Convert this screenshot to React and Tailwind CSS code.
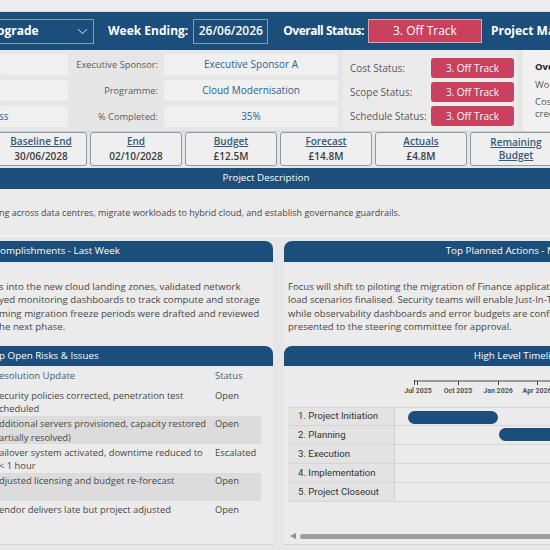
import { ChevronDown } from "lucide-react";

const risks = [
  { text: ["ecurity policies corrected, penetration test", "cheduled"], status: "Open", shade: false },
  { text: ["dditional servers provisioned, capacity restored", "artially resolved)"], status: "Open", shade: true },
  { text: ["ailover system activated, downtime reduced to", "< 1 hour"], status: "Escalated", shade: false },
  { text: ["djusted licensing and budget re-forecast"], status: "Open", shade: true },
  { text: ["endor delivers late but project adjusted"], status: "Open", shade: false },
];

const phases = [
  "1. Project Initiation",
  "2. Planning",
  "3. Execution",
  "4. Implementation",
  "5. Project Closeout",
];

const cards = [
  { label: "Baseline End", value: "30/06/2028" },
  { label: "End", value: "02/10/2028" },
  { label: "Budget", value: "£12.5M" },
  { label: "Forecast", value: "£14.8M" },
  { label: "Actuals", value: "£4.8M" },
  { label: "Remaining Budget", value: "" },
];

function InfoBox({ children }) {
  return (
    <div className="h-[21px] bg-[#f0f0f0] rounded-[2px] flex items-center justify-center text-[#2f6090] text-[10px]">
      {children}
    </div>
  );
}

function Badge() {
  return (
    <div className="w-[83px] h-[20px] bg-[#c9415c] rounded-[3px] flex items-center justify-center text-white text-[10px]">
      3. Off Track
    </div>
  );
}

function App() {
  return (
    <div className="w-[550px] h-[550px] overflow-hidden bg-[#e6e6e6] font-['Open_Sans',sans-serif] text-[#474747]">
      <div className="h-[12px] bg-[#ececec] border-b border-[#dadada]" />

      {/* header band */}
      <div className="h-[38px] bg-[#1b4e7a] flex items-center text-white whitespace-nowrap overflow-hidden">
        <div className="shrink-0 w-[94px] h-[25px] border border-l-0 border-[#7d9dbb] flex items-center justify-between pr-[2px]">
          <span className="text-[12px] font-bold -ml-[3px]">ograde</span>
          <ChevronDown size={17} strokeWidth={1.2} />
        </div>
        <span className="shrink-0 ml-[14px] text-[12px] font-bold">Week Ending:</span>
        <div className="shrink-0 ml-[5px] w-[75px] h-[25px] border border-[#7d9dbb] flex items-center justify-center text-[12px] font-semibold">
          26/06/2026
        </div>
        <span className="shrink-0 ml-[15px] text-[12px] font-bold tracking-[-0.5px]">Overall Status:</span>
        <div className="shrink-0 ml-[4px] w-[114px] h-[24px] bg-[#c9415c] border border-[#d9a3b0] flex items-center justify-center text-[12px]">
          3. Off Track
        </div>
        <span className="shrink-0 ml-[9px] text-[12px] font-bold">Project Manager:</span>
      </div>

      {/* info region */}
      <div className="h-[82px] flex border-b border-[#d2d2d2] overflow-hidden">
        <div className="shrink-0 w-[68px] pt-[4px] flex flex-col gap-[5px]">
          <InfoBox />
          <InfoBox />
          <div className="h-[21px] bg-[#f0f0f0] rounded-[2px] flex items-center text-[#2f6090] text-[10px] -ml-[1px]">
            ss
          </div>
        </div>
        <div className="shrink-0 w-[96px] pt-[4px] pr-[6px] flex flex-col gap-[5px] text-right text-[9.3px] text-[#5a5a5a]">
          <div className="h-[21px] leading-[21px]">Executive Sponsor:</div>
          <div className="h-[21px] leading-[21px]">Programme:</div>
          <div className="h-[21px] leading-[21px]">% Completed:</div>
        </div>
        <div className="shrink-0 w-[174px] pt-[4px] flex flex-col gap-[5px]">
          <InfoBox>Executive Sponsor A</InfoBox>
          <InfoBox>Cloud Modernisation</InfoBox>
          <InfoBox>35%</InfoBox>
        </div>
        <div className="shrink-0 w-[175px] ml-[5px] bg-[#ebebeb] pl-[7px] pt-[8px] flex flex-col gap-[4px]">
          {["Cost Status:", "Scope Status:", "Schedule Status:"].map((l) => (
            <div key={l} className="flex items-center h-[20px]">
              <span className="w-[81px] text-[10px] text-[#5a5a5a]">{l}</span>
              <Badge />
            </div>
          ))}
        </div>
        <div className="shrink-0 w-[200px] ml-[5px] bg-[#f1f1f1] pl-[12px] pt-[10px] text-[9.5px] whitespace-nowrap">
          <div className="font-bold text-[#222] leading-[14px]">Overall Commentary</div>
          <div className="mt-[4px] text-[#555] leading-[14px]">Workstreams progressing</div>
          <div className="mt-[4px] text-[#555] leading-[12px]">Cost pressure from scope</div>
          <div className="text-[#555] leading-[12px]">creep</div>
        </div>
      </div>

      {/* kpi cards */}
      <div className="h-[34px] flex gap-[3px] -ml-[5px]">
        {cards.map((c) => (
          <div
            key={c.label}
            className="shrink-0 w-[92px] h-[34px] border border-[#8d9aa6] rounded-[3px] bg-[#efefef] flex flex-col items-center justify-center text-[10px] font-semibold leading-[13px]"
          >
            {c.value ? (
              <>
                <span className="underline text-[#35597a]">{c.label}</span>
                <span className="mt-[2px] text-[#3b3b3b]">{c.value}</span>
              </>
            ) : (
              <span className="underline text-[#35597a] text-center w-[60px]">{c.label}</span>
            )}
          </div>
        ))}
      </div>

      {/* description */}
      <div className="mt-[2px] h-[21px] bg-[#1b4e7a] text-white text-[9.8px] flex items-center justify-center pr-[18px]">
        Project Description
      </div>
      <div className="h-[48px] bg-[#ebebeb] border-b border-[#f4f4f4] flex items-center text-[9px] whitespace-nowrap -ml-[1px]">
        ng across data centres, migrate workloads to hybrid cloud, and establish governance guardrails.
      </div>

      {/* accomplishments / planned */}
      <div className="mt-[4px] flex gap-[11px] h-[104px]">
        <div className="shrink-0 w-[273px] flex flex-col">
          <div className="h-[21px] bg-[#1b4e7a] rounded-tr-[8px] text-white text-[9.8px] flex items-center whitespace-nowrap">
            omplishments - Last Week
          </div>
          <div className="flex-1 bg-[#ebebeb] pt-[18px] text-[9.7px] leading-[13.4px] whitespace-nowrap -ml-[1px]">
            <div>s into the new cloud landing zones, validated network</div>
            <div>yed monitoring dashboards to track compute and storage</div>
            <div>ming migration freeze periods were drafted and reviewed</div>
            <div>he next phase.</div>
          </div>
        </div>
        <div className="shrink-0 w-[474px] flex flex-col">
          <div className="h-[21px] bg-[#1b4e7a] rounded-tl-[8px] text-white text-[9.8px] flex items-center justify-center">
            Top Planned Actions - Next Week
          </div>
          <div className="flex-1 bg-[#ebebeb] pt-[18px] pl-[4px] text-[9.6px] leading-[13.4px] whitespace-nowrap">
            <div>Focus will shift to piloting the migration of Finance applications once performance and</div>
            <div>load scenarios finalised. Security teams will enable Just-In-Time access for administrators,</div>
            <div>while observability dashboards and error budgets are configured. The cutover plan will be</div>
            <div>presented to the steering committee for approval.</div>
          </div>
        </div>
      </div>

      {/* risks / timeline */}
      <div className="mt-[1px] flex gap-[11px] h-[199px]">
        <div className="shrink-0 w-[273px] flex flex-col bg-[#ebebeb] border-b border-[#d4d4d4]">
          <div className="h-[20px] bg-[#1b4e7a] rounded-tr-[8px] text-white text-[9.8px] flex items-center whitespace-nowrap -ml-[1px]">
            p Open Risks &amp; Issues
          </div>
          <div className="h-[21px] flex items-center text-[9.5px] text-[#3b6186]">
            <span className="w-[216px] -ml-[1px]">esolution Update</span>
            <span>Status</span>
          </div>
          {risks.map((r) => (
            <div
              key={r.status + r.text[0]}
              className={
                r.shade
                  ? "w-[261px] h-[28.6px] pt-[1.5px] flex bg-[#dcdcdc] text-[9.4px] leading-[13.5px]"
                  : "w-[261px] h-[28.6px] pt-[1.5px] flex text-[9.4px] leading-[13.5px]"
              }
            >
              <div className="w-[216px] whitespace-nowrap -ml-[1px]">
                {r.text.map((t) => (
                  <div key={t}>{t}</div>
                ))}
              </div>
              <div>{r.status}</div>
            </div>
          ))}
        </div>

        <div className="shrink-0 w-[468px] flex flex-col bg-[#ebebeb] border-b border-[#d4d4d4]">
          <div className="h-[20px] bg-[#1b4e7a] rounded-tl-[8px] text-white text-[9.8px] flex items-center justify-center">
            High Level Timeline
          </div>
          <svg width="266" height="41" className="block">
            <line x1="130" y1="15" x2="266" y2="15" stroke="#444" strokeWidth="1" />
            <line x1="130.5" y1="14" x2="130.5" y2="19" stroke="#444" strokeWidth="1" />
            {[133.5, 174.5, 214.5, 253.5].map((x) => (
              <line key={x} x1={x} y1="15" x2={x} y2="19" stroke="#444" strokeWidth="1" />
            ))}
            {[
              [134, "Jul 2025"],
              [174, "Oct 2025"],
              [214, "Jan 2026"],
              [253, "Apr 2026"],
            ].map(([x, t]) => (
              <text
                key={t}
                x={x}
                y="27"
                textAnchor="middle"
                fontFamily="Roboto, sans-serif"
                fontWeight="700"
                fontSize="7"
                fill="#555"
              >
                {t}
              </text>
            ))}
          </svg>
          <div className="ml-[4px] font-['Roboto',sans-serif] text-[9.6px] text-[#333]">
            {phases.map((p, i) => (
              <div key={p} className="flex h-[19px] border-b border-[#d6d6d6] first:border-t">
                <div className="w-[107px] bg-[#e3e3e3] border-r border-[#d0d0d0] pl-[10px] flex items-center">
                  {p}
                </div>
                <div className="relative flex-1">
                  {i === 0 && (
                    <div className="absolute left-[13px] top-[3px] w-[90px] h-[13px] rounded-full bg-[#1b4e7a]" />
                  )}
                  {i === 1 && (
                    <div className="absolute left-[104px] top-[2px] w-[200px] h-[13px] rounded-full bg-[#1b4e7a]" />
                  )}
                </div>
              </div>
            ))}
          </div>
          <div className="mt-auto mb-[5px] ml-[6px] flex items-center gap-[3px]">
            <div className="w-0 h-0 border-y-[3.5px] border-y-transparent border-r-[6px] border-r-[#8f8f8f]" />
            <div className="ml-[1px] w-[300px] h-[5px] rounded-full bg-[#9d9d9d]" />
          </div>
        </div>
      </div>
    </div>
  );
}

export default App;
